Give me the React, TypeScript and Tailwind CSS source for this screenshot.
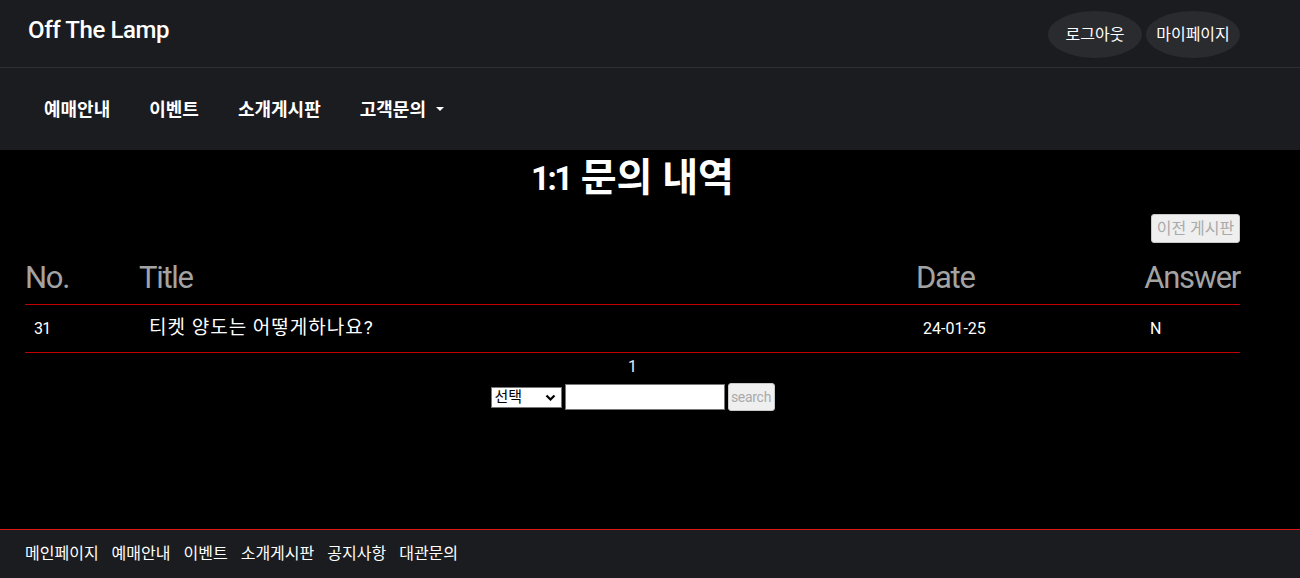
/* ------------------------------------------------------------------ */
/*  Data                                                               */
/* ------------------------------------------------------------------ */

const navItems = ['예매안내', '이벤트', '소개게시판'];
const footerLinks = ['메인페이지', '예매안내', '이벤트', '소개게시판', '공지사항', '대관문의'];

const rows = [{ no: 31, title: '티켓 양도는 어떻게하나요?', date: '24-01-25', answer: 'N' }];

const font = "font-['Roboto','Noto_Sans_CJK_KR',sans-serif]";

/* ------------------------------------------------------------------ */
/*  Header                                                             */
/* ------------------------------------------------------------------ */

function Header() {
  return (
    <header className="bg-[#1b1c1f]">
      <div className="flex h-[68px] items-center justify-between border-b border-[#2e2f33] pl-[28px] pr-[60px]">
        <span className="mb-[8px] text-[24px] font-medium tracking-[-0.4px] text-white">Off The Lamp</span>
        <div className="flex items-center gap-[4px] pt-[2px]">
          <button className="h-[47px] w-[94px] rounded-[50%] bg-[#2a2b2f] text-[16px] text-white">로그아웃</button>
          <button className="h-[47px] w-[94px] rounded-[50%] bg-[#2a2b2f] text-[16px] text-white">마이페이지</button>
        </div>
      </div>
      <nav className="flex h-[82px] items-center gap-[39px] pl-[44px]">
        {navItems.map((item) => (
          <a key={item} className="text-[18px] font-bold text-white">
            {item}
          </a>
        ))}
        <a className="flex items-center gap-[10px] text-[18px] font-bold text-white">
          고객문의
          <span className="h-0 w-0 border-x-[4px] border-t-[4px] border-x-transparent border-t-white" />
        </a>
      </nav>
    </header>
  );
}

/* ------------------------------------------------------------------ */
/*  Inquiry list                                                       */
/* ------------------------------------------------------------------ */

function InquiryList() {
  return (
    <main className="flex-1 bg-black pl-[25px] pr-[60px]">
      <h1 className="flex h-[52px] items-center justify-center gap-[10px] pt-[4px] font-bold text-white">
        <span className="text-[33px] leading-none tracking-[-2.5px]">1:1</span>
        <span className="text-[39px] leading-none">문의 내역</span>
      </h1>

      <div className="mt-[12px] flex justify-end">
        <button className="h-[29px] w-[89px] rounded-[3px] border border-[#c8c8c8] bg-[#efefef] text-[16px] text-[#aaaaaa]">
          이전 게시판
        </button>
      </div>

      <div className="mt-[19px] grid grid-cols-[114px_777px_226px_98px] border-b border-[#c00000] pb-[10px] text-[31px] leading-[32px] tracking-[-1.3px] text-[#a3a3a3]">
        <span>No.</span>
        <span>Title</span>
        <span>Date</span>
        <span className="text-right">Answer</span>
      </div>

      {rows.map((r) => (
        <div
          key={r.no}
          className="grid h-[48px] grid-cols-[114px_777px_226px_98px] items-center border-b border-[#c00000] text-white"
        >
          <span className="pl-[9px] text-[16px] tracking-[-0.8px]">{r.no}</span>
          <span className="pl-[10px] text-[19px] tracking-[1px]">{r.title}</span>
          <span className="pl-[7px] text-[16px]">{r.date}</span>
          <span className="pl-[8px] text-[16px]">{r.answer}</span>
        </div>
      ))}

      <p className="mt-[4px] text-center text-[16px] leading-[20px] text-[#e6eef5]">1</p>

      <form className="mt-[6px] flex items-center justify-center gap-[3px]" onSubmit={(e) => e.preventDefault()}>
        <div className="relative h-[21px] w-[71px] border border-[#767676] bg-white">
          <span className="absolute left-[3px] top-[-1px] text-[15px] leading-[20px] text-black">선택</span>
          <svg className="absolute right-[5px] top-[6px]" width="11" height="7" viewBox="0 0 11 7">
            <path d="M1.5 1.5 L5.5 5.5 L9.5 1.5" fill="none" stroke="#000" strokeWidth="2.2" />
          </svg>
        </div>
        <input className="h-[26px] w-[160px] border border-[#767676] bg-white" />
        <button className="h-[28px] w-[47px] rounded-[3px] border border-[#c8c8c8] bg-[#efefef] text-[14px] tracking-[-0.3px] text-[#aaaaaa]">
          search
        </button>
      </form>
    </main>
  );
}

/* ------------------------------------------------------------------ */
/*  Footer                                                             */
/* ------------------------------------------------------------------ */

function Footer() {
  return (
    <footer className="flex h-[49px] items-center gap-[13px] border-t border-[#e01515] bg-[#1b1c1f] pl-[25px]">
      {footerLinks.map((l) => (
        <a key={l} className="text-[16px] text-white">
          {l}
        </a>
      ))}
    </footer>
  );
}

/* ------------------------------------------------------------------ */
/*  App                                                                */
/* ------------------------------------------------------------------ */

export default function App() {
  return (
    <div className={`flex h-[578px] flex-col bg-black ${font}`}>
      <Header />
      <InquiryList />
      <Footer />
    </div>
  );
}
